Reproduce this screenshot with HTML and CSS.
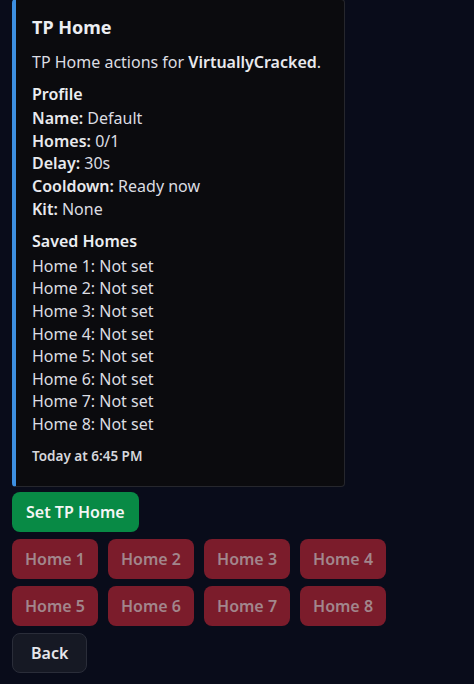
FILE: index.html
```html
<!DOCTYPE html>
<html lang="en">
<head>
    <meta charset="UTF-8">
    <title>TP Home</title>
    <link rel="stylesheet" href="styles.css">
</head>
<body>
    <div class="embed">
        <div class="embed-title">TP Home</div>
        <div class="embed-desc">TP Home actions for <b>VirtuallyCracked</b>.</div>

        <div class="field">
            <div class="field-name">Profile</div>
            <div><b>Name:</b> Default</div>
            <div><b>Homes:</b> 0/1</div>
            <div><b>Delay:</b> 30s</div>
            <div><b>Cooldown:</b> Ready now</div>
            <div><b>Kit:</b> None</div>
        </div>

        <div class="field">
            <div class="field-name">Saved Homes</div>
            <div>Home 1: Not set</div>
            <div>Home 2: Not set</div>
            <div>Home 3: Not set</div>
            <div>Home 4: Not set</div>
            <div>Home 5: Not set</div>
            <div>Home 6: Not set</div>
            <div>Home 7: Not set</div>
            <div>Home 8: Not set</div>
        </div>

        <div class="embed-footer">Today at 6:45 PM</div>
    </div>

    <div class="actions">
        <div class="row">
            <button class="btn btn-green">Set TP Home</button>
        </div>
        <div class="row">
            <button class="btn btn-red" disabled>Home 1</button>
            <button class="btn btn-red" disabled>Home 2</button>
            <button class="btn btn-red" disabled>Home 3</button>
            <button class="btn btn-red" disabled>Home 4</button>
        </div>
        <div class="row">
            <button class="btn btn-red" disabled>Home 5</button>
            <button class="btn btn-red" disabled>Home 6</button>
            <button class="btn btn-red" disabled>Home 7</button>
            <button class="btn btn-red" disabled>Home 8</button>
        </div>
        <div class="row">
            <button class="btn btn-grey">Back</button>
        </div>
    </div>
</body>
</html>
```

FILE: styles.css
```css
body {
    margin: 0;
    padding: 0 12px;
    background-color: #090c1a;
    font-family: "Noto Sans", sans-serif;
    color: #dcdde2;
}

.embed {
    width: 296px;
    margin-top: -1px;
    padding: 15px 16px 19px 16px;
    background-color: #0b0b0e;
    border: 1px solid #26272d;
    border-left: 4px solid #3d8fe0;
    border-radius: 4px;
    font-size: 16px;
    line-height: 22.6px;
}

.embed b {
    font-weight: 600;
    color: #e8e9ed;
}

.embed-title {
    font-size: 18px;
    font-weight: 700;
    line-height: 24px;
    color: #eceef2;
}

.embed-desc {
    margin-top: 12px;
}

.field {
    margin-top: 9px;
}

.field + .field {
    margin-top: 10px;
}

.field-name {
    margin-bottom: 2px;
    font-weight: 600;
    color: #eceef2;
}

.embed-footer {
    margin-top: 9px;
    font-size: 13.5px;
    font-weight: 600;
    color: #d6d7dc;
}

.actions {
    display: flex;
    flex-direction: column;
    gap: 7px;
    margin-top: 5px;
}

.row {
    display: flex;
    gap: 10px;
}

.btn {
    height: 40px;
    padding: 0 12px;
    border-radius: 8px;
    border: 1px solid transparent;
    font-family: "Noto Sans", sans-serif;
    font-size: 16px;
    font-weight: 600;
}

.btn-green {
    padding: 0 13px;
    background-color: #088a45;
    color: #f4f6f5;
}

.btn-red {
    background-color: #7b1c2b;
    color: #a2868c;
}

.btn-grey {
    padding: 0 18px;
    background-color: #161924;
    border-color: #2a2d39;
    color: #e6e7ec;
}
```
